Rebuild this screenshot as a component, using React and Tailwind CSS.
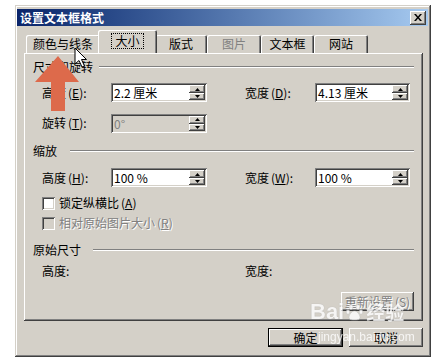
import React from 'react'

const raised = 'shadow-[inset_-1px_-1px_#404040,inset_1px_1px_#fff,inset_-2px_-2px_#808080,inset_2px_2px_#d4d0c8]'
const sunken = 'shadow-[inset_1px_1px_#808080,inset_-1px_-1px_#fff,inset_2px_2px_#404040,inset_-2px_-2px_#d4d0c8]'

function Key({ k, children }) {
  return (
    <span>
      {children}
      <span className="ml-[2px]">(</span>
      <span className="underline underline-offset-1">{k}</span>
      <span>)</span>
    </span>
  )
}

function Tri({ down }) {
  return (
    <svg width="5" height="3" viewBox="0 0 5 3">
      <path d={down ? 'M0 0h5L2.5 3z' : 'M2.5 0L5 3H0z'} fill="#000" />
    </svg>
  )
}

function SpinBox({ value, disabled, w = 'w-[96px]' }) {
  return (
    <div className={`flex ${w} h-[19px] p-[2px] ${sunken} ${disabled ? 'bg-[#d4d0c8]' : 'bg-white'}`}>
      <div className={`flex-1 pl-[1px] text-[12px] leading-[15px] ${disabled ? 'text-[#808080]' : 'text-black'}`}>
        {value}
      </div>
      <div className="flex flex-col w-[16px]">
        <div className={`h-[8px] flex items-center justify-center bg-[#d4d0c8] ${raised}`}>
          <Tri />
        </div>
        <div className={`h-[7px] flex items-center justify-center bg-[#d4d0c8] ${raised}`}>
          <Tri down />
        </div>
      </div>
    </div>
  )
}

function Section({ title, lineStart }) {
  return (
    <div className="flex items-center h-[14px]">
      <span className={`${lineStart} leading-[14px]`}>{title}</span>
      <div className="flex-1 h-[2px] border-t border-t-[#808080] border-b border-b-white" />
    </div>
  )
}

function Tab({ label, active, disabled, w }) {
  if (active) {
    return (
      <div className={`${w} h-[23px] -ml-[2px] relative z-10 bg-[#d4d0c8] rounded-t-[2px] flex items-center justify-center pb-[2px] shadow-[inset_1px_1px_#fff,inset_-1px_0_#404040,inset_-2px_0_#808080]`}>
        <span className="px-[3px] leading-[14px] outline outline-1 outline-dotted outline-black">{label}</span>
      </div>
    )
  }
  return (
    <div className={`${w} h-[18px] bg-[#d4d0c8] rounded-t-[2px] flex items-center justify-center shadow-[inset_1px_1px_#fff,inset_-1px_0_#404040,inset_-2px_0_#808080]`}>
      <span className={disabled ? 'text-[#808080]' : 'text-black'}>{label}</span>
    </div>
  )
}

export default function App() {
  return (
    <div className="relative w-[438px] h-[357px] bg-white pl-[15px] pt-[5px] overflow-hidden font-['Noto_Sans_CJK_SC','Noto_Sans',sans-serif] text-[12px] text-black">
      {/* window */}
      <div className="w-[416px] h-[352px] bg-[#d4d0c8] flex flex-col shadow-[inset_-1px_-1px_#404040,inset_1px_1px_#d4d0c8,inset_-2px_-2px_#808080,inset_2px_2px_#fff]">
        {/* title bar */}
        <div className="mt-[4px] ml-[2px] mr-[3px] h-[17px] flex items-center justify-between bg-gradient-to-r from-[#0a246a] to-[#a6caf0]">
          <span className="ml-[3px] text-white font-bold leading-[17px]">设置文本框格式</span>
          <div className={`mr-[2px] w-[16px] h-[14px] bg-[#d4d0c8] flex items-center justify-center ${raised}`}>
            <svg width="8" height="7" viewBox="0 0 8 7">
              <path d="M0 0h2l2 2.5L6 0h2L5 3.5 8 7H6L4 4.5 2 7H0l3-3.5z" fill="#000" />
            </svg>
          </div>
        </div>

        {/* tabs */}
        <div className="mt-[5px] ml-[11px] flex items-end h-[22px]">
          <Tab label="颜色与线条" w="w-[74px]" />
          <Tab label="大小" active w="w-[59px]" />
          <div className="-ml-[2px] flex items-end">
            <Tab label="版式" w="w-[52px]" />
          </div>
          <Tab label="图片" disabled w="w-[54px]" />
          <Tab label="文本框" w="w-[53px]" />
          <Tab label="网站" w="w-[54px]" />
        </div>

        {/* panel */}
        <div className="ml-[9px] w-[399px] h-[268px] flex flex-col px-[9px] shadow-[inset_-1px_-1px_#404040,inset_1px_1px_#fff,inset_-2px_-2px_#808080]">
          <div className="mt-[7px]">
            <Section title="尺寸和旋转" lineStart="mr-[6px]" />
          </div>

          <div className="mt-[9px] pl-[9px] flex items-center h-[19px]">
            <span className="w-[69px]"><Key k="E">高度</Key>:</span>
            <SpinBox value="2.2 厘米" />
            <span className="ml-[38px] w-[70px]"><Key k="D">宽度</Key>:</span>
            <SpinBox value="4.13 厘米" w="w-[95px]" />
          </div>

          <div className="mt-[12px] pl-[9px] flex items-center h-[18px]">
            <span className="w-[69px]"><Key k="T">旋转</Key>:</span>
            <SpinBox value="0°" disabled />
          </div>

          <div className="mt-[12px]">
            <Section title="缩放" lineStart="mr-[13px]" />
          </div>

          <div className="mt-[10px] pl-[9px] flex items-center h-[19px]">
            <span className="w-[69px]"><Key k="H">高度</Key>:</span>
            <SpinBox value="100 %" />
            <span className="ml-[38px] w-[70px]"><Key k="W">宽度</Key>:</span>
            <SpinBox value="100 %" w="w-[95px]" />
          </div>

          <div className="mt-[9px] pl-[9px] flex items-center h-[14px]">
            <div className={`w-[13px] h-[13px] bg-white ${sunken}`} />
            <span className="ml-[4px]"><Key k="A">锁定纵横比</Key></span>
          </div>

          <div className="mt-[6px] pl-[9px] flex items-center h-[14px]">
            <div className={`w-[13px] h-[13px] bg-[#d4d0c8] ${sunken}`} />
            <span className="ml-[4px] text-[#808080] [text-shadow:1px_1px_0_#fff]"><Key k="R">相对原始图片大小</Key></span>
          </div>

          <div className="mt-[13px]">
            <Section title="原始尺寸" lineStart="mr-[12px]" />
          </div>

          <div className="mt-[7px] pl-[9px] flex items-center h-[14px]">
            <span className="w-[203px]">高度:</span>
            <span>宽度:</span>
          </div>

          <div className="mt-[14px] flex justify-end">
            <div className={`w-[73px] h-[19px] flex items-center justify-center text-[#808080] [text-shadow:1px_1px_0_#fff] ${raised}`}>
              重新设置<span className="ml-[2px]">(S)</span>
            </div>
          </div>
        </div>

        {/* buttons */}
        <div className="mt-[7px] ml-[253px] flex gap-[6px]">
          <div className="w-[75px] h-[19px] border border-black flex">
            <div className={`flex-1 flex items-center justify-center ${raised}`}>确定</div>
          </div>
          <div className={`w-[74px] h-[19px] flex items-center justify-center ${raised}`}>取消</div>
        </div>
      </div>

      {/* overlays: arrow, cursor, watermark */}
      <svg className="absolute left-0 top-0 pointer-events-none" width="438" height="357" viewBox="0 0 438 357">
        <path d="M58 56L79 82H65V111H51V82H35Z" fill="#dd6a4b" />
        <path d="M75 48V64L79 60.5L82 67L84.5 66L81.5 59.5H86.5Z" fill="#fff" stroke="#000" strokeWidth="1" strokeLinejoin="round" />
      </svg>
      <div className="absolute left-[310px] top-[300px] flex items-center text-white opacity-80 pointer-events-none">
        <span className="text-[22px] font-bold leading-[24px] font-['Liberation_Sans',sans-serif] [text-shadow:0_0_1px_#999]">Bai</span>
        <svg width="20" height="20" viewBox="0 0 20 20" className="mx-[1px]">
          <g fill="#fff" stroke="#bbb" strokeWidth="0.5">
            <ellipse cx="6" cy="5" rx="2" ry="2.6" />
            <ellipse cx="13" cy="5" rx="2" ry="2.6" />
            <ellipse cx="3" cy="10" rx="1.8" ry="2.3" />
            <ellipse cx="16" cy="10" rx="1.8" ry="2.3" />
            <path d="M9.5 9c3 0 5.5 4 5.5 6.5S12 18 9.5 18 4 18 4 15.5 6.5 9 9.5 9z" />
          </g>
        </svg>
        <span className="text-[19px] font-bold leading-[24px] [text-shadow:0_0_1px_#999]">经验</span>
      </div>
      <div className="absolute left-[318px] top-[330px] text-[12px] leading-[14px] text-white opacity-80 font-['Liberation_Sans',sans-serif] pointer-events-none">
        jingyan.baidu.com
      </div>
    </div>
  )
}
